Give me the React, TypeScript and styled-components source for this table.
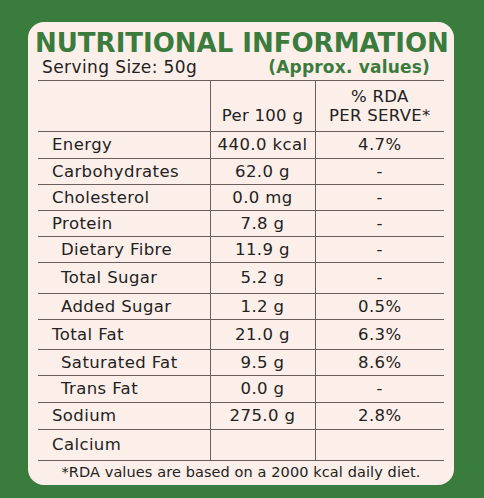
import React from 'react';
import styled, { createGlobalStyle } from 'styled-components';

// --- 데이터 ---
interface NutrientRow {
  name: string;
  per100: string;
  rda: string;
  sub?: boolean;
  h: number;
}

const ROWS: NutrientRow[] = [
  { name: 'Energy', per100: '440.0 kcal', rda: '4.7%', h: 27 },
  { name: 'Carbohydrates', per100: '62.0 g', rda: '-', h: 26 },
  { name: 'Cholesterol', per100: '0.0 mg', rda: '-', h: 26 },
  { name: 'Protein', per100: '7.8 g', rda: '-', h: 26 },
  { name: 'Dietary Fibre', per100: '11.9 g', rda: '-', sub: true, h: 26 },
  { name: 'Total Sugar', per100: '5.2 g', rda: '-', sub: true, h: 31 },
  { name: 'Added Sugar', per100: '1.2 g', rda: '0.5%', sub: true, h: 26 },
  { name: 'Total Fat', per100: '21.0 g', rda: '6.3%', h: 30 },
  { name: 'Saturated Fat', per100: '9.5 g', rda: '8.6%', sub: true, h: 26 },
  { name: 'Trans Fat', per100: '0.0 g', rda: '-', sub: true, h: 27 },
  { name: 'Sodium', per100: '275.0 g', rda: '2.8%', h: 27 },
  { name: 'Calcium', per100: '', rda: '', h: 31 },
];

const LINE = '#6a5f5c';

// --- 스타일 ---
const GlobalStyle = createGlobalStyle`
  html, body {
    margin: 0;
    padding: 0;
  }
  body {
    font-family: 'DejaVu Sans', 'Liberation Sans', sans-serif;
  }
`;

const Page = styled.div`
  width: 484px;
  height: 498px;
  box-sizing: border-box;
  background-color: #3a7c3d;
  padding: 22px 30px 13px 28px;
`;

const Card = styled.div`
  height: 100%;
  box-sizing: border-box;
  background-color: #fcefe9;
  border-radius: 16px;
  padding: 7px 10px 0 10px;
  display: flex;
  flex-direction: column;
`;

const Title = styled.h1`
  margin: 0 -3px;
  font-family: 'DejaVu Sans', sans-serif;
  font-weight: 700;
  font-size: 26px;
  line-height: 28px;
  color: #3b7b3e;
  text-align: center;
  white-space: nowrap;
`;

const SubRow = styled.div`
  display: flex;
  justify-content: space-between;
  align-items: baseline;
  padding: 0 14px 0 4px;
  height: 23px;
`;

const Serving = styled.span`
  font-size: 17px;
  letter-spacing: 0.4px;
  color: #222;
`;

const Approx = styled.span`
  font-size: 17px;
  font-weight: 700;
  letter-spacing: 0.2px;
  color: #3b7b3e;
`;

const Table = styled.table`
  width: 100%;
  border-collapse: collapse;
  border-top: 1px solid ${LINE};
  table-layout: fixed;
`;

const HeadRow = styled.tr`
  height: 51px;
`;

const HeadCell = styled.th`
  box-sizing: border-box;
  font-weight: 400;
  font-size: 16.5px;
  line-height: 19px;
  letter-spacing: 0.3px;
  color: #222;
  vertical-align: bottom;
  padding: 0 0 6px 0;
  border-left: 1px solid ${LINE};
  border-bottom: 1px solid ${LINE};
  &:first-child {
    border-left: none;
  }
`;

const Row = styled.tr<{ $h: number }>`
  height: ${({ $h }) => $h}px;
`;

const Cell = styled.td<{ $sub?: boolean; $left?: boolean }>`
  box-sizing: border-box;
  font-size: 16.5px;
  line-height: 18px;
  letter-spacing: 0.4px;
  color: #222;
  padding: 0 0 0 ${({ $left, $sub }) => ($left ? ($sub ? '23px' : '14px') : '0')};
  text-align: ${({ $left }) => ($left ? 'left' : 'center')};
  border-bottom: 1px solid ${LINE};
  border-left: ${({ $left }) => ($left ? 'none' : `1px solid ${LINE}`)};
  white-space: nowrap;
`;

const Footer = styled.div`
  flex: 1;
  display: flex;
  align-items: center;
  justify-content: center;
  font-size: 14.5px;
  letter-spacing: 0.1px;
  color: #222;
  padding-bottom: 2px;
  white-space: nowrap;
`;

// --- 컴포넌트 ---
const App: React.FC = () => {
  return (
    <>
      <GlobalStyle />
      <Page>
        <Card>
          <Title>NUTRITIONAL INFORMATION</Title>
          <SubRow>
            <Serving>Serving Size: 50g</Serving>
            <Approx>(Approx. values)</Approx>
          </SubRow>
          <Table>
            <colgroup>
              <col style={{ width: 172 }} />
              <col style={{ width: 105 }} />
              <col />
            </colgroup>
            <thead>
              <HeadRow>
                <HeadCell />
                <HeadCell>Per 100 g</HeadCell>
                <HeadCell>
                  % RDA
                  <br />
                  PER SERVE*
                </HeadCell>
              </HeadRow>
            </thead>
            <tbody>
              {ROWS.map((row) => (
                <Row key={row.name} $h={row.h}>
                  <Cell $left $sub={row.sub}>{row.name}</Cell>
                  <Cell>{row.per100}</Cell>
                  <Cell>{row.rda}</Cell>
                </Row>
              ))}
            </tbody>
          </Table>
          <Footer>*RDA values are based on a 2000 kcal daily diet.</Footer>
        </Card>
      </Page>
    </>
  );
};

export default App;
